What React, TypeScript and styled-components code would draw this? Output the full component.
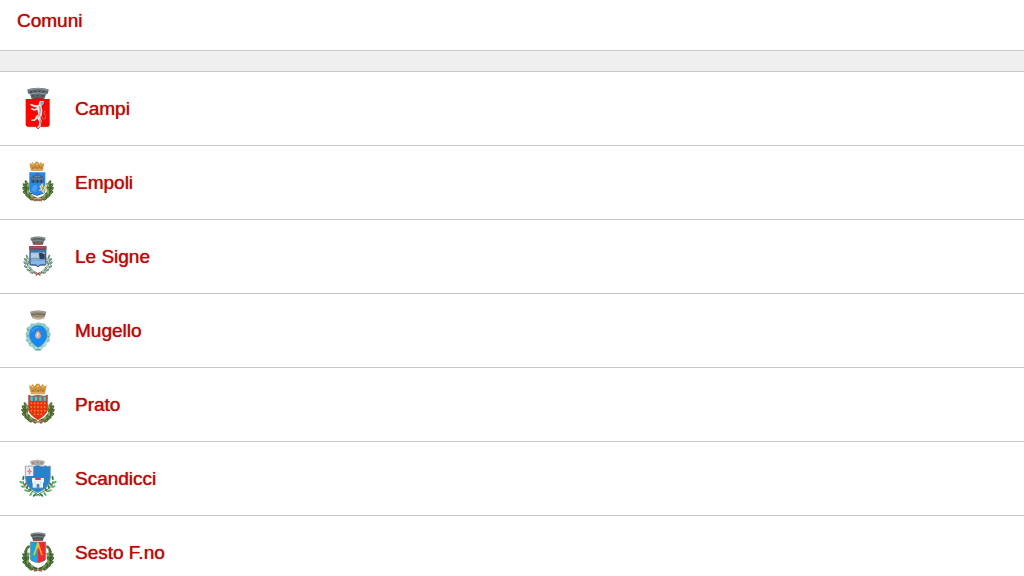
import React from "react";
import styled, { createGlobalStyle } from "styled-components";

const GlobalStyle = createGlobalStyle`
  * { box-sizing: border-box; }
  body {
    margin: 0;
    background: #fff;
    color: #b90c0c;
    font-family: "Liberation Sans", Helvetica, Arial, sans-serif;
  }
`;

const Header = styled.header`
  padding: 8px 17px 16px;
  border-bottom: 1px solid #c8c8c8;
`;

const Title = styled.h1`
  margin: 0;
  font-size: 19px;
  line-height: 26px;
  font-weight: 400;
  text-shadow: 0 0 1px currentColor;
`;

const Main = styled.main`
  padding-top: 20px;
  background: #efefef;
`;

const List = styled.ul`
  margin: 0;
  padding: 0;
  list-style: none;
  background: #fff;
  border-top: 1px solid #c8c8c8;
`;

const Row = styled.li`
  border-bottom: 1px solid #c8c8c8;
`;

const RowLink = styled.a`
  display: flex;
  align-items: flex-start;
  gap: 13px;
  padding: 10px 14px 11px;
  color: inherit;
  text-decoration: none;
`;

const Name = styled.span`
  padding: 14px 0 12px;
  font-size: 19px;
  line-height: 26px;
  text-shadow: 0 0 1px currentColor;
`;

const CrestSvg = styled.svg`
  display: block;
  flex: none;
  width: 48px;
  height: 52px;
`;

/* Mural crown, spanning x 50..94 and y 20..44 */
const StoneCrown = ({ base = "#626a72" }: { base?: string }) => (
  <g>
    <path d="M50 23 Q72 16 94 23 V31 L90 33 L87 44 H57 L54 33 L50 31 Z" fill={base} />
    <path d="M52 25 Q72 19 92 25" stroke="#8f979d" strokeWidth="3" fill="none" />
    <path d="M56 28 Q72 24 88 28" stroke="#4a5057" strokeWidth="2" fill="none" />
    <path d="M55 33 Q72 29 89 33" stroke="#8b9298" strokeWidth="2" fill="none" />
    <path d="M59 39 H63 M70 38 H74 M81 39 H85" stroke="#3f464d" strokeWidth="4" />
  </g>
);

/* Golden city crown with five towers */
const GoldCrown = () => (
  <g>
    <path d="M50 21 L55 24 L59 18 L64 24 L69 17 H76 L80 24 L85 18 L89 24 L95 21 L90 45 H55 Z" fill="#cf9440" />
    <path d="M57 25 H61 M70 24 H75 M84 25 H88" stroke="#e9c37a" strokeWidth="4" />
    <path d="M59 36 H62 M66 33 H68 M72 36 H75 M79 33 H81 M84 36 H87" stroke="#96582a" strokeWidth="4" />
    <path d="M55 42 H90" stroke="#e8ba66" strokeWidth="3" />
  </g>
);

const leaves = [
  [36, 80, -25], [42, 87, 30], [31, 89, -40], [41, 98, 25],
  [30, 99, -45], [41, 109, 0], [32, 110, -55], [47, 117, -15],
  [40, 120, -55], [54, 123, -40], [50, 128, -65], [61, 129, -60],
];

const Wreath = ({ dark, light, inset = 0, slim = false }: { dark: string; light: string; inset?: number; slim?: boolean }) => {
  const side = (
    <g>
      <path d="M36 84 Q29 117 70 131" fill="none" stroke={dark} strokeWidth={slim ? 3 : 11} />
      {leaves.map(([x, y, a], i) => (
        <ellipse key={i} cx={x} cy={y} rx={slim ? 3 : 4} ry={slim ? 6 : 8} fill={i % 4 === 1 ? light : dark} transform={`rotate(${a} ${x} ${y})`} />
      ))}
      {leaves.map(([x, y, a], i) => (
        <path key={i} d={`M${x} ${y - 4} V${y + 3}`} stroke={light} strokeWidth="2" transform={`rotate(${a} ${x} ${y})`} />
      ))}
    </g>
  );
  return (
    <g>
      <g transform={`translate(${inset} 0)`}>{side}</g>
      <g transform={`translate(${144 - inset} 0) scale(-1 1)`}>{side}</g>
    </g>
  );
};

const Campi = () => (
  <g>
    <path d="M40 22 Q72 13 104 22 L102 34 L96 37 L91 51 H53 L48 37 L42 34 Z" fill="#5f676f" />
    <path d="M43 24 Q72 16 101 24" fill="none" stroke="#8d959b" strokeWidth="4" />
    <path d="M49 30 H54 M61 28 H66 M73 28 H78 M86 29 H91" stroke="#3f474f" strokeWidth="4" />
    <path d="M47 36 Q72 30 97 36" fill="none" stroke="#969da2" strokeWidth="3" />
    <path d="M54 42 H60 M68 41 H74 M83 42 H89" stroke="#444b53" strokeWidth="4" />
    <path d="M35 51 H107 V126 Q107 134 99 134 H79 L72 141 L65 134 H43 Q35 134 35 126 Z" fill="#fb0500" />
    <path d="M58 47 H87 L84 52 H60 Z" fill="#a5242a" />
    <path d="M36 128 Q37 134 43 134 H65 L72 141 L79 134 H99 Q105 134 106 128" fill="none" stroke="#b6362f" strokeWidth="2" />
    <path d="M76 59 L81 56 L90 58 L88 66 L82 71 L85 84 L84 99 L79 106 L83 116 L80 132 L73 138 L68 136 L74 131 L76 119 L70 110 L62 117 L51 116 L52 113 L61 112 L66 103 L73 97 L70 84 L59 86 L50 80 L53 78 L61 81 L70 77 L58 74 L48 69 L50 65 L62 69 L73 70 Z" fill="#dfe5e2" />
    <path d="M80 58 L89 60 L86 67 L79 69 Z" fill="#83a8b3" />
    <path d="M77 73 L79 85 L77 98 L70 106 M79 112 L79 128" fill="none" stroke="#8d8b88" strokeWidth="3" />
    <path d="M83 103 Q88 118 94 108 Q98 101 91 96 Q88 91 93 86" fill="none" stroke="#d99a90" strokeWidth="2" />
  </g>
);

const Empoli = () => (
  <g>
    <Wreath dark="#41652f" light="#8fad62" inset={1} />
    <g transform="translate(-4 0)">
      <GoldCrown />
      <path d="M50 49 H98 V103 Q98 109 90 111 L74 118 L58 111 Q50 109 50 103 Z" fill="#2686eb" />
      <path d="M53 111 L74 118 L96 110" fill="none" stroke="#244d99" strokeWidth="3" />
      <path d="M54 80 V66 L59 61 L65 58 L74 52 L83 58 L89 61 L94 66 V80 Z" fill="#426589" />
      <path d="M57 69 H91 M66 61 H82" stroke="#86a6bb" strokeWidth="2" />
      <path d="M62 71 V80 M74 71 V80 M86 71 V80" stroke="#263c63" strokeWidth="4" />
      <path d="M56 104 L62 88 H74 L70 108 Z" fill="#4f9ee2" />
      <path d="M80 91 L92 80 L91 92 L103 86 L98 98 L107 101 L95 105 L92 113 L86 104 L77 104 L84 98 Z" fill="#d9d4aa" />
      <path d="M86 91 L97 103 M95 88 L88 104" stroke="#a39a66" strokeWidth="3" />
    </g>
    <path d="M50 126 L70 133 L92 126 M64 131 L59 136 M78 131 L84 136" fill="none" stroke="#a8694c" strokeWidth="4" />
    <path d="M60 127 H82" stroke="#d8b49a" strokeWidth="3" />
  </g>
);

const LeSigne = () => (
  <g>
    <Wreath dark="#527e68" light="#a7c5ae" inset={3} slim />
    <StoneCrown base="#70706f" />
    <path d="M60 39 Q73 35 85 39 V44 H60 Z" fill="#a85045" />
    <path d="M46 48 H97 V103 Q97 107 90 107 H79 L72 112 L65 107 H53 Q46 107 46 103 Z" fill="#3c5f91" />
    <path d="M46 48 H97 V60 H46 Z" fill="#8d4562" />
    <path d="M49 52 H94" stroke="#b85468" strokeWidth="3" />
    <path d="M49 63 H94" stroke="#4c6fa5" strokeWidth="6" />
    <path d="M50 67 H93 V91 H50 Z" fill="#87b4d9" />
    <path d="M51 70 H73 V84 H51 Z" fill="#b5cfdf" />
    <path d="M75 69 H86 V72 H92 V88 H77 Z" fill="#2e3e58" />
    <path d="M51 88 Q60 81 71 86 T93 88" fill="none" stroke="#6b96c2" strokeWidth="3" />
    <path d="M50 91 H94 V103 H79 L72 108 L65 103 H50 Z" fill="#8bb7e4" />
    <path d="M59 126 L72 132 L85 126 M70 130 L66 137 M74 130 L79 137" fill="none" stroke="#a85554" strokeWidth="4" />
    <path d="M63 125 L68 131 M82 125 L77 131" stroke="#dfc2bb" strokeWidth="2" />
  </g>
);

const Mugello = () => (
  <g>
    <path d="M48 23 Q72 16 97 23 L94 34 L90 43 Q73 50 56 43 L51 34 Z" fill="#978c7a" />
    <path d="M51 25 Q72 18 94 25" fill="none" stroke="#a9a596" strokeWidth="3" />
    <path d="M52 32 Q73 27 93 32" fill="none" stroke="#6c6b62" strokeWidth="4" />
    <path d="M56 40 Q73 46 90 40" fill="none" stroke="#ccb98f" strokeWidth="4" />
    <path d="M72 55 L84 58 L94 59 L98 67 L107 72 L105 82 L111 91 L106 101 L108 111 L99 117 L96 127 L87 130 L82 139 L72 141 L62 139 L56 130 L46 126 L43 116 L35 111 L38 100 L34 91 L39 81 L37 72 L47 67 L51 58 L63 59 Z" fill="#91c9cc" />
    <path d="M46 112 L54 123 M98 114 L89 126 M63 132 H83" fill="none" stroke="#c5e4e2" strokeWidth="4" />
    <path d="M39 76 L46 80 M38 97 L45 95 M46 119 L54 115 M105 78 L98 83 M106 99 L99 96 M65 138 L71 135 L79 138" fill="none" stroke="#5d979d" strokeWidth="3" />
    <path d="M72 65 C89 65 98 77 98 93 C98 110 84 123 73 130 C61 123 47 110 47 93 C47 77 56 65 72 65 Z" fill="#1688f2" stroke="#357ca7" strokeWidth="2" />
    <path d="M53 84 Q58 71 73 69" fill="none" stroke="#51aafa" strokeWidth="3" />
    <ellipse cx="72" cy="92" rx="9" ry="12" fill="#c7aca9" />
    <path d="M64 90 Q65 80 73 80 Q80 82 80 92" fill="none" stroke="#85727a" strokeWidth="3" />
    <path d="M71 86 V98" stroke="#efe0da" strokeWidth="5" />
  </g>
);

const Prato = () => (
  <g>
    <Wreath dark="#48652f" light="#8fa45e" inset={-2} />
    <g transform="translate(-14 -2) scale(1.18 1.12)"><GoldCrown /></g>
    <path d="M44 51 L52 55 L72 52 L91 55 L100 51 V94 Q100 110 72 125 Q44 110 44 94 Z" fill="#e63313" stroke="#a93b24" strokeWidth="2" />
    <path d="M47 55 H97 V69 H47 Z" fill="#4e8799" />
    <path d="M53 56 V68 M66 56 V68 M79 56 V68 M92 56 V68" stroke="#66bdda" strokeWidth="6" />
    <path d="M59 57 V69 M72 57 V69 M86 57 V69" stroke="#a95b56" strokeWidth="3" />
    {[76, 87, 98, 109].map((y, r) =>
      [52, 62, 72, 82, 92].slice(r === 3 ? 1 : 0, r === 3 ? 4 : 5).map((x) => (
        <path key={`${x}-${y}`} d={`M${x} ${y - 3} L${x + 3} ${y} L${x} ${y + 3} L${x - 3} ${y} Z`} fill="#f4a12c" />
      ))
    )}
    <path d="M52 129 L72 132 L92 129 M67 131 L62 137 M77 131 L82 137" fill="none" stroke="#a8664c" strokeWidth="4" />
    <path d="M62 129 H82" stroke="#dfbd9f" strokeWidth="2" />
  </g>
);

const branch = (
  <g>
    <path d="M27 87 Q30 107 47 114 Q60 119 78 132" fill="none" stroke="#3a8b50" strokeWidth="3" />
    {[[28, 78, 10], [22, 91, -60], [35, 96, 45], [26, 104, -75], [40, 104, 15], [37, 116, -70], [49, 112, 15], [51, 126, 35], [62, 129, 50]].map(([x, y, a], i) => (
      <ellipse key={i} cx={x} cy={y} rx="3" ry="7" fill={i % 2 ? "#4db66a" : "#267f42"} transform={`rotate(${a} ${x} ${y})`} />
    ))}
    <circle cx="31" cy="100" r="3" fill="#da4b3f" />
    <circle cx="45" cy="117" r="3" fill="#d85545" />
  </g>
);

const Scandicci = () => (
  <g>
    {branch}
    <g transform="translate(144 0) scale(-1 1)">{branch}</g>
    <path d="M48 28 Q70 19 93 28 L91 34 L88 40 H53 L50 34 Z" fill="#b5a9a8" />
    <path d="M52 27 Q71 22 90 27" fill="none" stroke="#cdbfbd" strokeWidth="2" />
    <path d="M55 33 H60 M68 31 H73 M80 33 H85" stroke="#8d7976" strokeWidth="4" />
    <path d="M34 42 Q40 45 47 41 Q60 46 71 40 Q84 46 95 41 Q101 45 109 42 V77 Q109 107 71 122 Q34 107 34 77 Z" fill="#2c80c8" stroke="#6c95b4" strokeWidth="2" />
    <path d="M35 43 Q42 46 48 42 L58 44 V72 H35 Z" fill="#f1e9ec" />
    <path d="M46 50 V67 M40 58 H53" stroke="#dc6472" strokeWidth="3" />
    <path d="M42 54 L51 63 M51 54 L42 63" stroke="#edacb3" strokeWidth="2" />
    <path d="M54 78 H64 V84 H80 V78 H90 V90 L87 93 V107 H56 V93 L54 90 Z" fill="#f0f5f8" />
    <path d="M64 88 V100 M80 88 V100" stroke="#bdd3e1" strokeWidth="2" />
    <path d="M68 98 Q72 92 76 98 V107 H68 Z" fill="#3d7eb7" />
    <path d="M64 79 H80" fill="none" stroke="#d84048" strokeWidth="3" />
    <path d="M58 108 H87" stroke="#7d9db5" strokeWidth="2" />
  </g>
);

const Sesto = () => (
  <g>
    <Wreath dark="#37632e" light="#799b58" />
    <path d="M47 61 Q36 63 35 84 M97 61 Q108 63 109 84" fill="none" stroke="#47703a" strokeWidth="8" />
    <path d="M42 65 L39 72 M102 65 L105 72" stroke="#91ad72" strokeWidth="2" />
    <StoneCrown base="#555c63" />
    <path d="M59 40 Q72 36 85 40 V45 H59 Z" fill="#a34944" />
    <path d="M49 48 H72 V110 Q49 106 49 98 Z" fill="#18a5dc" />
    <path d="M72 48 H95 V98 Q95 106 72 110 Z" fill="#ed2930" />
    <path d="M49 48 H95 V98 Q95 106 72 110 Q49 106 49 98 Z" fill="none" stroke="#747780" strokeWidth="2" />
    <path d="M72 51 L60 88" stroke="#d9cb3b" strokeWidth="5" />
    <path d="M72 51 L84 88" stroke="#f4a52b" strokeWidth="5" />
    <path d="M72 49 V68" stroke="#f2d340" strokeWidth="3" />
    <path d="M52 129 L72 133 L92 129 M67 132 L61 138 M77 132 L83 138" fill="none" stroke="#ad5a50" strokeWidth="3" />
  </g>
);

const towns = [
  { name: "Campi", Crest: Campi },
  { name: "Empoli", Crest: Empoli },
  { name: "Le Signe", Crest: LeSigne },
  { name: "Mugello", Crest: Mugello },
  { name: "Prato", Crest: Prato },
  { name: "Scandicci", Crest: Scandicci },
  { name: "Sesto F.no", Crest: Sesto },
];

export default function App() {
  return (
    <>
      <GlobalStyle />
      <Header>
        <Title>Comuni</Title>
      </Header>
      <Main>
        <List>
          {towns.map(({ name, Crest }) => (
            <Row key={name}>
              <RowLink href="#">
                <CrestSvg viewBox="0 0 144 156" aria-hidden="true">
                  <Crest />
                </CrestSvg>
                <Name>{name}</Name>
              </RowLink>
            </Row>
          ))}
        </List>
      </Main>
    </>
  );
}
